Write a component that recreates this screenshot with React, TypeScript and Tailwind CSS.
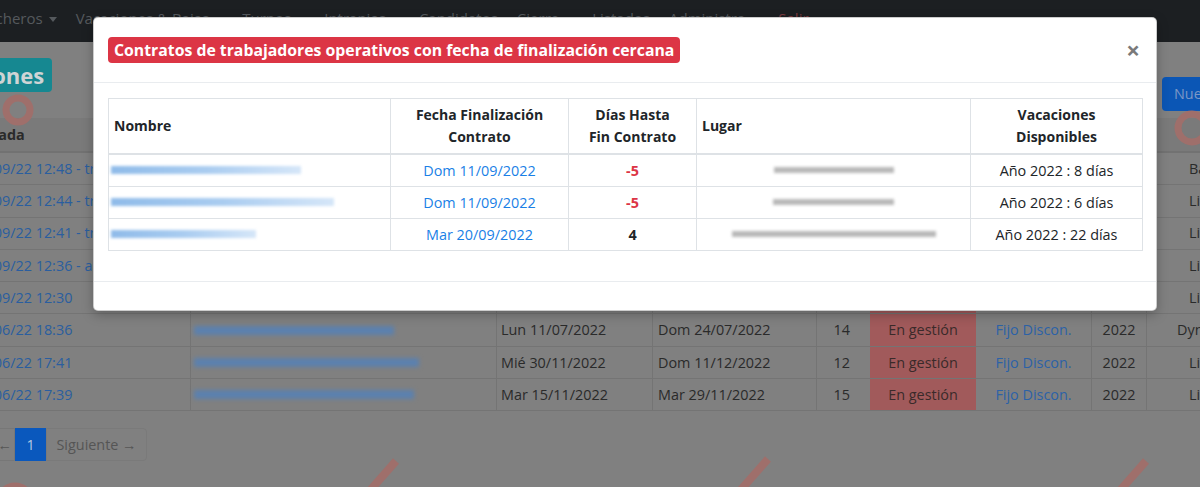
import React from 'react';

const navItems: { label: string; caret?: boolean; red?: boolean }[] = [
  { label: 'Ficheros', caret: true },
  { label: 'Vacaciones & Bajas', caret: true },
  { label: 'Turnos', caret: true },
  { label: 'Intranias', caret: true },
  { label: 'Candidatos' },
  { label: 'Cierre', caret: true },
  { label: 'Listados' },
  { label: 'Administra', caret: true },
  { label: 'Salir', red: true },
];

interface BgRow {
  created: string;
  nameW: number;
  start: string;
  end: string;
  days: string;
  place: string;
}

const bgRows: BgRow[] = [
  { created: '14/09/22 12:48 - tr', nameW: 190, start: 'Lun 19/09/2022', end: 'Vie 23/09/2022', days: '5', place: 'Barcelona' },
  { created: '14/09/22 12:44 - tr', nameW: 210, start: 'Lun 19/09/2022', end: 'Vie 23/09/2022', days: '5', place: 'Lizarra' },
  { created: '14/09/22 12:41 - tr', nameW: 180, start: 'Lun 26/09/2022', end: 'Vie 30/09/2022', days: '5', place: 'Lizarra' },
  { created: '14/09/22 12:36 - ad', nameW: 200, start: 'Lun 03/10/2022', end: 'Vie 07/10/2022', days: '5', place: 'Lizarra' },
  { created: '14/09/22 12:30', nameW: 195, start: 'Lun 10/10/2022', end: 'Vie 14/10/2022', days: '5', place: 'Lizarra' },
  { created: '21/06/22 18:36', nameW: 200, start: 'Lun 11/07/2022', end: 'Dom 24/07/2022', days: '14', place: 'Dynamic' },
  { created: '21/06/22 17:41', nameW: 225, start: 'Mié 30/11/2022', end: 'Dom 11/12/2022', days: '12', place: 'Lizarra' },
  { created: '21/06/22 17:39', nameW: 220, start: 'Mar 15/11/2022', end: 'Mar 29/11/2022', days: '15', place: 'Lizarra' },
];

interface Contract {
  nameW: number;
  date: string;
  days: number;
  placeW: number;
  vac: string;
}

const contracts: Contract[] = [
  { nameW: 190, date: 'Dom 11/09/2022', days: -5, placeW: 120, vac: 'Año 2022 : 8 días' },
  { nameW: 223, date: 'Dom 11/09/2022', days: -5, placeW: 121, vac: 'Año 2022 : 6 días' },
  { nameW: 145, date: 'Mar 20/09/2022', days: 4, placeW: 204, vac: 'Año 2022 : 22 días' },
];

const markColor = '#9f6f6b';

// watermark "lo" logo, repeated over the page background
const Watermark = ({ x, y }: { x: number; y: number }) => (
  <svg className="pointer-events-none absolute" style={{ left: x, top: y }} width="60" height="80" viewBox="0 0 60 80">
    <line x1="46" y1="4" x2="16" y2="38" stroke={markColor} strokeWidth="8" />
    <circle cx="42" cy="55" r="16" fill="none" stroke={markColor} strokeWidth="8" />
  </svg>
);

const Ring = ({ x, y, r }: { x: number; y: number; r: number }) => (
  <svg className="pointer-events-none absolute" style={{ left: x - r - 5, top: y - r - 5 }} width={2 * r + 10} height={2 * r + 10}>
    <circle cx={r + 5} cy={r + 5} r={r} fill="none" stroke={markColor} strokeWidth="7" />
  </svg>
);

const Caret = () => <span className="ml-[6px] inline-block border-x-[4px] border-t-[5px] border-x-transparent border-t-current align-middle" />;

export default function App() {
  return (
    <div className="relative h-[487px] w-[1200px] overflow-hidden bg-[#808080] font-['Open_Sans',sans-serif] text-[14.4px] leading-[21.6px] text-[#2a2a2a]">
      {/* background page, dimmed by the modal backdrop */}
      <nav className="flex h-[42px] items-center bg-[#1c1f22] pb-[4px] text-[15px] text-[#55595d]">
        <div className="-ml-[16px] flex items-center gap-[19px]">
          {navItems.map((n) => (
            <span key={n.label} className={`flex items-center whitespace-nowrap ${n.red ? 'text-[#7a3a3f]' : ''}`}>
              {n.label}
              {n.caret && <Caret />}
            </span>
          ))}
        </div>
      </nav>

      <div className="flex h-[76px] items-start justify-between">
        <div className="-ml-[86px] mt-[16px] rounded-[4px] bg-[#168891] px-[8px] py-[2px] text-[22px] font-bold leading-[30px] text-[#cfd4d5]">
          Vacaciones
        </div>
        <div className="-mr-[22px] mt-[35px] flex gap-[4px]">
          <div className="h-[34px] w-[60px] rounded-[4px] bg-[#0b56b5] px-[12px] text-[14.4px] leading-[34px] text-[#7b97c6]">Nuevo</div>
        </div>
      </div>

      <div className="-ml-[34px] w-[1260px]">
        <div className="flex h-[35px] items-center border-b-2 border-[#727272] bg-[#7a7a7a] font-bold">
          <div className="w-[224px] pl-[2px]">Entrada</div>
        </div>
        {bgRows.map((r, i) => (
          <div key={i} className="flex h-[32.3px] items-center border-b border-[#747474]">
            <div className="w-[224px] whitespace-nowrap pl-[6px] text-[#2a5e9f]">{r.created}</div>
            <div className="flex h-full w-[306px] items-center border-l border-[#747474] pl-[3px]">
              <div className="h-[9px] bg-[#5b80ae] blur-[2px]" style={{ width: r.nameW }} />
            </div>
            <div className="flex h-full w-[156px] items-center border-l border-[#747474] pl-[4px]">{r.start}</div>
            <div className="flex h-full w-[164px] items-center border-l border-[#747474] pl-[5px]">{r.end}</div>
            <div className="flex h-full w-[54px] items-center justify-end border-l border-[#747474] pr-[20px]">{r.days}</div>
            <div className="flex h-full w-[106px] items-center justify-center bg-[#a15a5b] text-[#3a2a2a]">En gestión</div>
            <div className="flex h-full w-[115px] items-center justify-center text-[#2c62a7]">Fijo Discon.</div>
            <div className="flex h-full w-[55px] items-center justify-center border-l border-[#747474]">2022</div>
            <div className={`flex h-full w-[80px] items-center overflow-hidden whitespace-nowrap border-l border-[#747474] ${r.place === 'Dynamic' ? 'pl-[30px]' : 'pl-[42px]'}`}>{r.place}</div>
          </div>
        ))}

        <div className="mt-[17px] flex h-[33px] text-[14.4px]">
          <div className="flex w-[49px] items-center justify-end rounded-l-[4px] border border-[#777] pr-[2px] text-[#555]">←</div>
          <div className="flex w-[31px] items-center justify-center bg-[#0a58bd] text-[#b7c8e2]">1</div>
          <div className="flex w-[101px] items-center justify-center rounded-r-[4px] border border-[#7a7a7a] text-[#555]">Siguiente →</div>
        </div>
      </div>

      {/* watermark logos */}
      <Watermark x={350} y={457} />
      <Watermark x={722} y={455} />
      <Watermark x={1100} y={457} />
      <Ring x={15} y={502} r={16} />
      <Ring x={18} y={110} r={12} />
      <Ring x={1192} y={128} r={14} />

      {/* modal */}
      <div className="absolute left-[93px] top-[17px] w-[1064px] rounded-[5px] border border-black/20 bg-white text-[#212529] shadow-[0_4px_12px_rgba(0,0,0,0.25)]">
        <div className="flex h-[65px] items-center justify-between border-b border-[#e9ecef] pl-[14px] pr-[16px]">
          <span className="rounded-[4px] bg-[#dc3545] px-[6px] text-[15.8px] font-bold leading-[26px] text-white">
            Contratos de trabajadores operativos con fecha de finalización cercana
          </span>
          <span className="text-[24px] font-bold leading-none text-[#7a7a7a]">×</span>
        </div>
        <div className="px-[14px] pb-[30px] pt-[15px]">
          <table className="w-[1034px] table-fixed border-collapse border border-[#dee2e6]">
            <colgroup>
              <col className="w-[282px]" />
              <col className="w-[178px]" />
              <col className="w-[128px]" />
              <col className="w-[274px]" />
              <col className="w-[172px]" />
            </colgroup>
            <thead>
              <tr className="border-b-2 border-[#dee2e6] text-[14px] font-bold">
                <th className="border border-[#dee2e6] px-[5px] py-[5.4px] text-left">Nombre</th>
                <th className="border border-[#dee2e6] px-[5px] py-[5.4px] text-center">Fecha Finalización<br />Contrato</th>
                <th className="border border-[#dee2e6] px-[5px] py-[5.4px] text-center">Días Hasta<br />Fin Contrato</th>
                <th className="border border-[#dee2e6] px-[5px] py-[5.4px] text-left">Lugar</th>
                <th className="border border-[#dee2e6] px-[5px] py-[5.4px] text-center">Vacaciones<br />Disponibles</th>
              </tr>
            </thead>
            <tbody>
              {contracts.map((c, i) => (
                <tr key={i}>
                  <td className="border border-[#dee2e6] px-[2px] py-[5px]">
                    <div className="flex h-[21px] items-center">
                      <div className="h-[8px] bg-gradient-to-r from-[#8fbbe9] via-[#a9ccf0] to-[#d5e6f8] blur-[1.5px]" style={{ width: c.nameW }} />
                    </div>
                  </td>
                  <td className="border border-[#dee2e6] px-[5px] py-[5px] text-center leading-[21px] text-[#1a7fe6]">{c.date}</td>
                  <td className={`border border-[#dee2e6] px-[5px] py-[5px] text-center font-bold leading-[21px] ${c.days < 0 ? 'text-[#dc3545]' : 'text-[#212529]'}`}>{c.days}</td>
                  <td className="border border-[#dee2e6] px-[5px] py-[5px]">
                    <div className="flex h-[21px] items-center justify-center">
                      <div className="h-[6px] bg-[#b9b9b9] blur-[1.5px]" style={{ width: c.placeW }} />
                    </div>
                  </td>
                  <td className="border border-[#dee2e6] px-[5px] py-[5px] text-center leading-[21px]">{c.vac}</td>
                </tr>
              ))}
            </tbody>
          </table>
        </div>
        <div className="h-[29px] border-t border-[#e9ecef]" />
      </div>
    </div>
  );
}
